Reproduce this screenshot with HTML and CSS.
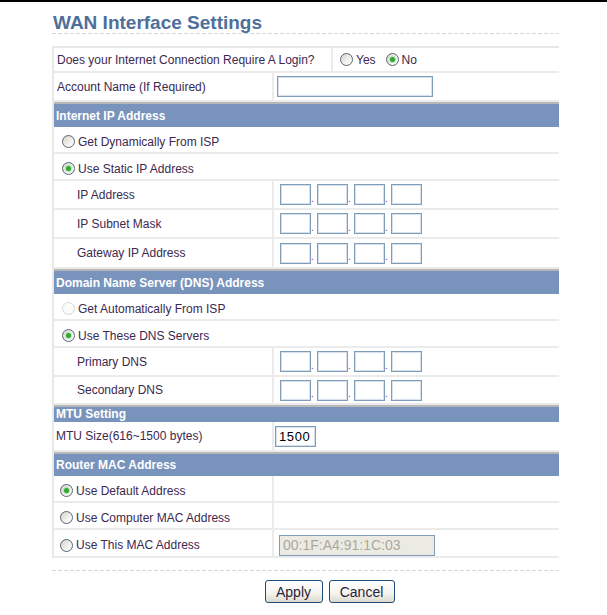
FILE: index.html
```html
<!DOCTYPE html>
<html>
<head>
<meta charset="utf-8">
<title>WAN Interface Settings</title>
<link rel="stylesheet" href="styles.css">
</head>
<body>
<div class="topline"></div>
<div class="page">
  <h1 class="title">WAN Interface Settings</h1>
  <div class="dash"></div>

  <div class="panel">
    <div class="row h25">
      <div class="cell q">Does your Internet Connection Require A Login?</div>
      <div class="cell opts">
        <span class="opt gap"><span class="radio"></span>Yes</span>
        <span class="opt"><span class="radio on"></span>No</span>
      </div>
    </div>
    <div class="row h29">
      <div class="cell lab">Account Name (If Required)</div>
      <div class="cell val p3"><span class="field wide"></span></div>
    </div>

    <div class="head">Internet IP Address</div>
    <div class="row h27 low"><div class="cell full p8"><span class="radio"></span>Get Dynamically From ISP</div></div>
    <div class="row h27 low"><div class="cell full p8"><span class="radio on"></span>Use Static IP Address</div></div>
    <div class="row h29">
      <div class="cell lab ind">IP Address</div>
      <div class="cell val p6"><span class="field oct"></span><span class="dot">.</span><span class="field oct"></span><span class="dot">.</span><span class="field oct"></span><span class="dot">.</span><span class="field oct"></span></div>
    </div>
    <div class="row h29">
      <div class="cell lab ind">IP Subnet Mask</div>
      <div class="cell val p6"><span class="field oct"></span><span class="dot">.</span><span class="field oct"></span><span class="dot">.</span><span class="field oct"></span><span class="dot">.</span><span class="field oct"></span></div>
    </div>
    <div class="row h30">
      <div class="cell lab ind">Gateway IP Address</div>
      <div class="cell val p6"><span class="field oct"></span><span class="dot">.</span><span class="field oct"></span><span class="dot">.</span><span class="field oct"></span><span class="dot">.</span><span class="field oct"></span></div>
    </div>

    <div class="head">Domain Name Server (DNS) Address</div>
    <div class="row h27 low"><div class="cell full p8"><span class="radio off"></span>Get Automatically From ISP</div></div>
    <div class="row h27 low"><div class="cell full p8"><span class="radio on"></span>Use These DNS Servers</div></div>
    <div class="row h29">
      <div class="cell lab ind">Primary DNS</div>
      <div class="cell val p6"><span class="field oct"></span><span class="dot">.</span><span class="field oct"></span><span class="dot">.</span><span class="field oct"></span><span class="dot">.</span><span class="field oct"></span></div>
    </div>
    <div class="row h28">
      <div class="cell lab ind">Secondary DNS</div>
      <div class="cell val p6"><span class="field oct"></span><span class="dot">.</span><span class="field oct"></span><span class="dot">.</span><span class="field oct"></span><span class="dot">.</span><span class="field oct"></span></div>
    </div>

    <div class="head small">MTU Setting</div>
    <div class="row h30">
      <div class="cell lab mtulab">MTU Size(616~1500 bytes)</div>
      <div class="cell val p1"><span class="field mtu">1500</span></div>
    </div>

    <div class="head macHead">Router MAC Address</div>
    <div class="row h27 mac-row">
      <div class="cell lab p6"><span class="radio on"></span>Use Default Address</div>
      <div class="cell val"></div>
    </div>
    <div class="row h27 mac-row">
      <div class="cell lab p6"><span class="radio"></span>Use Computer MAC Address</div>
      <div class="cell val"></div>
    </div>
    <div class="row h28 mac-row">
      <div class="cell lab p6"><span class="radio"></span>Use This MAC Address</div>
      <div class="cell val p5"><span class="field mac">00:1F:A4:91:1C:03</span></div>
    </div>
  </div>

  <div class="dash bottom"></div>

  <div class="buttons">
    <button class="btn apply">Apply</button>
    <button class="btn cancel">Cancel</button>
  </div>
</div>
</body>
</html>
```

FILE: styles.css
```css
html, body {
  margin: 0;
  padding: 0;
  background: #ffffff;
}

body {
  font-family: "Liberation Sans", Arial, sans-serif;
  font-size: 12px;
  color: #3c2850;
}

.topline {
  height: 2px;
  background: #000000;
}

.page {
  margin-left: 52px;
  width: 555px;
}

.title {
  margin: 11px 0 0 1px;
  font-size: 19px;
  line-height: 20px;
  font-weight: bold;
  color: #4e6f9a;
}

.dash {
  width: 507px;
  height: 1px;
  background: repeating-linear-gradient(90deg, #d3d8e3 0 4px, transparent 4px 6px);
}

.dash.bottom {
  margin-top: 12px;
}

.panel {
  width: 507px;
  margin-top: 12px;
  border-top: 2px solid #e8e8e8;
  border-left: 2px solid #e8e8e8;
  box-sizing: border-box;
}

.row {
  display: flex;
  box-sizing: border-box;
  border-bottom: 2px solid #ebebeb;
}

.row.low .cell { padding-top: 4px; }
.row.mac-row .cell { padding-top: 4px; }

.h25 { height: 25px; }
.h27 { height: 27px; }
.h28 { height: 28px; }
.h29 { height: 29px; }
.h30 { height: 30px; }

.cell {
  display: flex;
  align-items: center;
  box-sizing: border-box;
  white-space: nowrap;
}

.q {
  width: 279px;
  padding-left: 3px;
  border-right: 2px solid #ebebeb;
}

.opts {
  padding-left: 7px;
}

.opt {
  display: flex;
  align-items: center;
}

.opt.gap {
  margin-right: 10px;
}

.lab {
  width: 220px;
  padding-left: 3px;
  border-right: 2px solid #ebebeb;
}

.lab.ind { padding-left: 23px; }
.lab.p6 { padding-left: 6px; }
.lab.mtulab { padding-left: 2px; }

.val { flex: 1; }
.full { flex: 1; }

.p1 { padding-left: 1px; }
.p3 { padding-left: 3px; }
.p5 { padding-left: 5px; }
.p6 { padding-left: 6px; }
.p8 { padding-left: 8px; }

.head {
  height: 25px;
  box-sizing: border-box;
  border-top: 2px solid #b8b8b8;
  background: #7893bc;
  color: #ffffff;
  font-weight: bold;
  padding-left: 2px;
  display: flex;
  align-items: center;
}

.head.small {
  height: 17px;
  padding-bottom: 2px;
}

.head.macHead {
  height: 24px;
  padding-bottom: 1px;
}

.radio {
  width: 13px;
  height: 13px;
  box-sizing: border-box;
  border-radius: 50%;
  border: 1px solid #56657a;
  background: linear-gradient(135deg, #d4d3cc 0%, #f2f2ee 60%, #ffffff 100%);
  margin-right: 3px;
  position: relative;
  flex: none;
}

.radio.on::after {
  content: "";
  position: absolute;
  left: 3px;
  top: 3px;
  width: 5px;
  height: 5px;
  border-radius: 50%;
  background: #31a931;
  box-shadow: 0 0 0 1px #b9e3b9;
}

.radio.off {
  border-color: #d8d8d4;
  background: #fbfbfb;
}

.field {
  display: inline-flex;
  align-items: center;
  box-sizing: border-box;
  height: 21px;
  border: 1px solid #7f9db9;
  box-shadow: inset 0 0 0 1px #d6e1ec;
  background: #ffffff;
  font-size: 14px;
  color: #000000;
}

.wide { width: 156px; }

.oct { width: 31px; }

.dot {
  width: 6px;
  font-size: 10px;
  line-height: 10px;
  align-self: center;
  margin-top: 8px;
  color: #8a2ea0;
  overflow: hidden;
}

.mtu {
  width: 41px;
  padding-left: 3px;
  font-size: 13px;
  letter-spacing: 0.6px;
}

.mac {
  width: 156px;
  padding-left: 3px;
  background: #ebebe4;
  box-shadow: none;
  color: #aca899;
}

.buttons {
  display: flex;
  justify-content: center;
  gap: 6px;
  margin-top: 9px;
}

.btn {
  height: 23px;
  box-sizing: border-box;
  padding: 0;
  border: 1px solid #1f4b7a;
  border-radius: 3px;
  background: linear-gradient(180deg, #ffffff 0%, #f4f3ee 60%, #dcd8cc 100%);
  font-family: "Liberation Sans", Arial, sans-serif;
  font-size: 14px;
  color: #2a1f3a;
}

.apply { width: 58px; }
.cancel { width: 66px; }
```
